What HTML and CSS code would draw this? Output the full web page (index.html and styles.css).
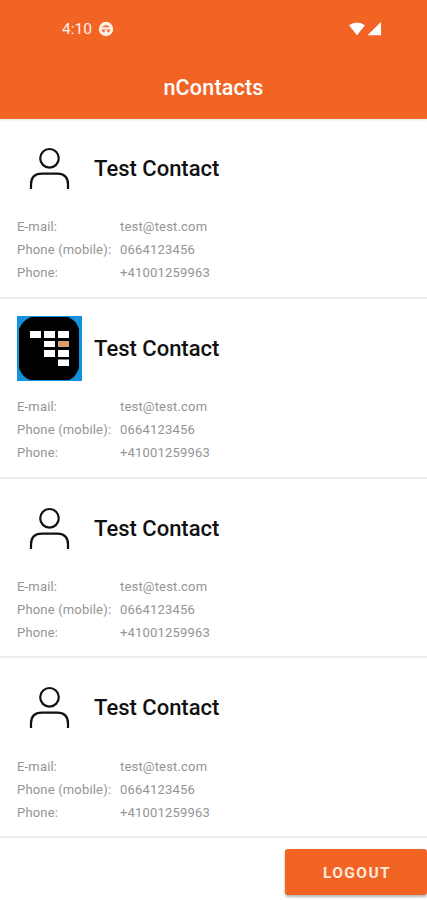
FILE: index.html
```html
<!DOCTYPE html>
<html lang="en">
<head>
    <meta charset="UTF-8">
    <meta name="viewport" content="width=device-width, initial-scale=1.0">
    <title>nContacts</title>
    <link rel="stylesheet" href="styles.css">
</head>
<body>
    <svg width="0" height="0" class="symbols">
        <symbol id="person" viewBox="0 0 65 65">
            <circle cx="32.5" cy="22.3" r="9.3" />
            <path d="M14 53v-4.5q0-10.8 10.8-10.8h15.4q10.8 0 10.8 10.8v4.5" />
        </symbol>
    </svg>

    <header class="header">
        <div class="status-bar">
            <span class="time">4:10</span>
            <svg class="status-icon" width="16" height="16" viewBox="0 0 16 16">
                <circle cx="8" cy="8" r="7.2" fill="#fff0e8" />
                <path d="M4 6.3q4-4 8 0z" fill="#f26424" />
                <path d="M4 9h2.6v2.2H5zM9.4 9H12l-1 2.2H9.4z" fill="#f26424" />
                <path d="M3.5 8.5h9" stroke="#f8b08e" />
            </svg>
            <svg class="signal" width="34" height="16" viewBox="0 0 34 16">
                <path d="M1 4.3Q9 -1.3 17 4.3L9 14.2z" fill="#fff" />
                <path d="M33 1v13.2H19.5z" fill="#fff" />
            </svg>
        </div>
        <h1>nContacts</h1>
    </header>

    <main>
        <section class="contact">
            <div class="contact-head">
                <svg class="avatar"><use href="#person" /></svg>
                <h2>Test Contact</h2>
            </div>
            <dl>
                <dt>E-mail:</dt><dd>test@test.com</dd>
                <dt>Phone (mobile):</dt><dd>0664123456</dd>
                <dt>Phone:</dt><dd>+41001259963</dd>
            </dl>
        </section>

        <section class="contact">
            <div class="contact-head">
                <svg class="avatar logo" viewBox="0 0 65 65">
                    <rect width="65" height="65" fill="#1590dc" />
                    <path d="M14 1h37q8 3 11 12v39q-3 9-10 12H13q-8-3-11-12V13q4-9 12-12z" fill="#000" />
                    <path d="M13 15h11v7H13zM27 15h11v7H27zM41 15h11v7H41zM27 25h11v6H27zM27 34h11v7H27zM41 34h11v7H41zM41 43.5h11v6.5H41z" fill="#fff" />
                    <path d="M41 25h11v6H41z" fill="#d7a06c" />
                </svg>
                <h2>Test Contact</h2>
            </div>
            <dl>
                <dt>E-mail:</dt><dd>test@test.com</dd>
                <dt>Phone (mobile):</dt><dd>0664123456</dd>
                <dt>Phone:</dt><dd>+41001259963</dd>
            </dl>
        </section>

        <section class="contact">
            <div class="contact-head">
                <svg class="avatar"><use href="#person" /></svg>
                <h2>Test Contact</h2>
            </div>
            <dl>
                <dt>E-mail:</dt><dd>test@test.com</dd>
                <dt>Phone (mobile):</dt><dd>0664123456</dd>
                <dt>Phone:</dt><dd>+41001259963</dd>
            </dl>
        </section>

        <section class="contact">
            <div class="contact-head">
                <svg class="avatar"><use href="#person" /></svg>
                <h2>Test Contact</h2>
            </div>
            <dl>
                <dt>E-mail:</dt><dd>test@test.com</dd>
                <dt>Phone (mobile):</dt><dd>0664123456</dd>
                <dt>Phone:</dt><dd>+41001259963</dd>
            </dl>
        </section>
    </main>

    <footer class="footer">
        <button class="logout">LOGOUT</button>
    </footer>
</body>
</html>
```

FILE: styles.css
```css
* {
    box-sizing: border-box;
}

body {
    margin: 0;
    height: 900px;
    overflow: hidden;
    background-color: #fff;
    font-family: Roboto, sans-serif;
}

.symbols {
    display: block;
}

.header {
    height: 119px;
    background-color: #f26424;
    border-bottom: 1px solid #ee6a30;
    box-shadow: 0 1px 2px rgba(0, 0, 0, 0.1);
    color: #fff;
}

.status-bar {
    display: flex;
    align-items: center;
    height: 58px;
    padding: 0 45px 0 62px;
}

.time {
    width: 36px;
    font-size: 15.5px;
    color: #fff0e8;
}

.signal {
    margin-left: auto;
}

h1 {
    margin: 0;
    font-size: 21.5px;
    font-weight: 500;
    line-height: 60px;
    text-align: center;
    letter-spacing: 0.2px;
}

.contact {
    height: 179.8px;
    padding: 17px 17px 0;
    border-bottom: 2px solid #ececec;
}

.contact-head {
    display: flex;
    align-items: center;
    gap: 12px;
}

.avatar {
    width: 65px;
    height: 65px;
    fill: none;
    stroke: #111;
    stroke-width: 2.2;
}

.logo {
    stroke: none;
}

h2 {
    margin: 0;
    font-size: 22px;
    font-weight: 500;
    color: #111;
}

dl {
    display: grid;
    grid-template-columns: 103px 1fr;
    margin: 14.4px 0 0;
    font-size: 13px;
    letter-spacing: 0.18px;
    line-height: 23px;
    color: #949494;
}

dd {
    margin: 0;
}

.footer {
    display: flex;
    justify-content: flex-end;
    padding-top: 11px;
}

.logout {
    width: 142px;
    height: 46px;
    padding: 2px 0 0 2px;
    border: none;
    border-radius: 3px;
    background-color: #f26424;
    box-shadow: 0 2px 3px rgba(0, 0, 0, 0.3);
    color: #ffe9de;
    font-family: inherit;
    font-size: 15.5px;
    font-weight: 700;
    letter-spacing: 1.4px;
}
```
